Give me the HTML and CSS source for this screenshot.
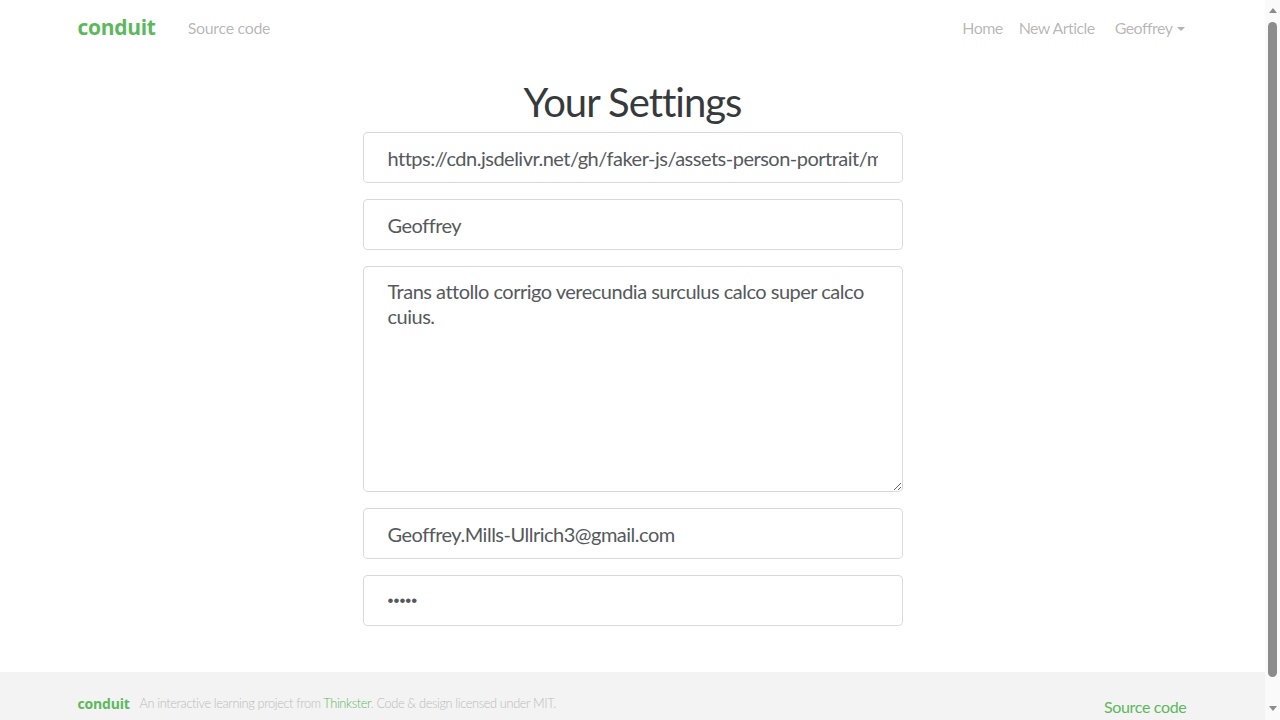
FILE: index.html
```html
<!DOCTYPE html>
<html lang="en">
<head>
<meta charset="utf-8">
<title>Settings — Conduit</title>
<link rel="stylesheet" href="styles.css">
</head>
<body>
<nav class="navbar">
  <div class="container nav-inner">
    <div class="nav-left">
      <a class="brand logo-font" href="#">conduit</a>
      <a class="nav-link" href="#">Source code</a>
    </div>
    <ul class="nav-right">
      <li><a class="nav-link" href="#">Home</a></li>
      <li><a class="nav-link" href="#">New Article</a></li>
      <li class="dropdown"><a class="nav-link" href="#">Geoffrey <span class="caret"></span></a></li>
    </ul>
  </div>
</nav>

<main class="settings-page">
  <div class="container page">
    <div class="col">
      <h1 class="title">Your Settings</h1>
      <form class="settings-form">
        <input class="form-control" type="text" value="https://cdn.jsdelivr.net/gh/faker-js/assets-person-portrait/male/512/12.jpg">
        <input class="form-control" type="text" value="Geoffrey">
        <textarea class="form-control textarea" rows="8">Trans attollo corrigo verecundia surculus calco super calco cuius.</textarea>
        <input class="form-control" type="email" value="Geoffrey.Mills-Ullrich3@gmail.com">
        <input class="form-control password" type="password" value="12345">
      </form>
    </div>
  </div>
</main>

<footer class="footer">
  <div class="container footer-inner">
    <div class="footer-left">
      <a class="footer-logo logo-font" href="#">conduit</a>
      <span class="attribution">An interactive learning project from <a href="#">Thinkster</a>. Code &amp; design licensed under MIT.</span>
    </div>
    <a class="footer-source" href="#">Source code</a>
  </div>
</footer>

<div class="scrollbar" aria-hidden="true">
  <span class="sb-arrow sb-up"></span>
  <span class="sb-thumb"></span>
  <span class="sb-arrow sb-down"></span>
</div>
</body>
</html>
```
FILE: styles.css
```css
html, body {
  margin: 0;
  padding: 0;
}
html { scrollbar-width: none; }
html::-webkit-scrollbar { display: none; }
body {
  margin-right: 15px;
  font-family: "Source Sans Pro", Lato, "Noto Sans", sans-serif;
  font-size: 16px;
  line-height: 1.5;
  letter-spacing: -0.02em;
  color: #373a3c;
  background: #fff;
}
a { text-decoration: none; }

.container {
  max-width: 1110px;
  margin: 0 auto;
  padding: 0 15px;
  box-sizing: content-box;
}

/* navbar */
.navbar {
  height: 56px;
}
.nav-inner {
  height: 55px;
  display: flex;
  align-items: center;
  justify-content: space-between;
}
.nav-left {
  display: flex;
  align-items: center;
}
.logo-font {
  font-family: "Open Sans", "Noto Sans", sans-serif;
  font-weight: 700;
  color: #5cb85c;
}
.brand {
  font-size: 21px;
  letter-spacing: -0.3px;
  margin-right: 32px;
  line-height: 1;
}
.nav-link {
  color: rgba(0, 0, 0, 0.3);
  font-size: 16px;
}
.nav-right .nav-link {
  letter-spacing: -0.035em;
}
.nav-right {
  list-style: none;
  margin: 0;
  padding: 0 3px 0 0;
  display: flex;
  gap: 16px;
}
.dropdown { margin-left: 4px; }
.caret {
  display: inline-block;
  width: 0;
  height: 0;
  border-left: 4px solid transparent;
  border-right: 4px solid transparent;
  border-top: 4px solid rgba(0, 0, 0, 0.3);
  vertical-align: middle;
  margin-left: 1px;
  margin-top: -1px;
}

/* page */
.page {
  padding-top: 24px;
  padding-bottom: 46px;
}
.col {
  width: 540px;
  margin: 0 auto;
}
.title {
  font-size: 40px;
  font-weight: 400;
  line-height: 1.1;
  letter-spacing: -0.025em;
  text-align: center;
  margin: 0 0 8px;
  color: #373a3c;
}
.settings-form {
  display: flex;
  flex-direction: column;
  gap: 16px;
}
.form-control {
  display: block;
  width: 100%;
  box-sizing: border-box;
  height: 51px;
  padding: 12px 24px;
  font-family: inherit;
  font-size: 20px;
  line-height: 1.25;
  letter-spacing: -0.025em;
  color: #55595c;
  background: #fff;
  border: 1px solid rgba(0, 0, 0, 0.15);
  border-radius: 4.8px;
  margin: 0;
  outline: none;
}
.password {
  font-family: "Liberation Sans", sans-serif;
  font-size: 17px;
  letter-spacing: 0;
}
.textarea {
  height: 226px;
  resize: vertical;
}

/* footer */
.footer {
  background: #f3f3f3;
  padding: 16px 0;
  height: 56px;
}
.footer-inner {
  display: flex;
  justify-content: space-between;
  align-items: flex-start;
}
.footer-left {
  display: flex;
  align-items: center;
  padding-top: 5px;
}
.footer-logo {
  font-size: 14px;
  letter-spacing: -0.2px;
}
.attribution {
  margin-left: 10px;
  font-size: 12.8px;
  font-weight: 300;
  letter-spacing: -0.03em;
  color: #bbb;
}
.attribution a { color: #5cb85c; }
.footer-source {
  color: #5cb85c;
  font-size: 16px;
  padding-top: 7px;
  padding-right: 1px;
}

/* fake classic scrollbar */
.scrollbar {
  position: fixed;
  top: 0;
  right: 0;
  width: 15px;
  height: 100vh;
  box-sizing: border-box;
  background: #fafafa;
  display: flex;
  flex-direction: column;
  align-items: center;
  padding: 8px 0 9px;
}
.sb-arrow {
  width: 0;
  height: 0;
  border-left: 4px solid transparent;
  border-right: 4px solid transparent;
}
.sb-up { border-bottom: 5px solid #8c8c8c; }
.sb-down { border-top: 5px solid #8c8c8c; }
.sb-thumb {
  flex: 1;
  width: 9px;
  margin: 9px 0 29px;
  background: #8c8c8c;
  border-radius: 5px;
}
```
